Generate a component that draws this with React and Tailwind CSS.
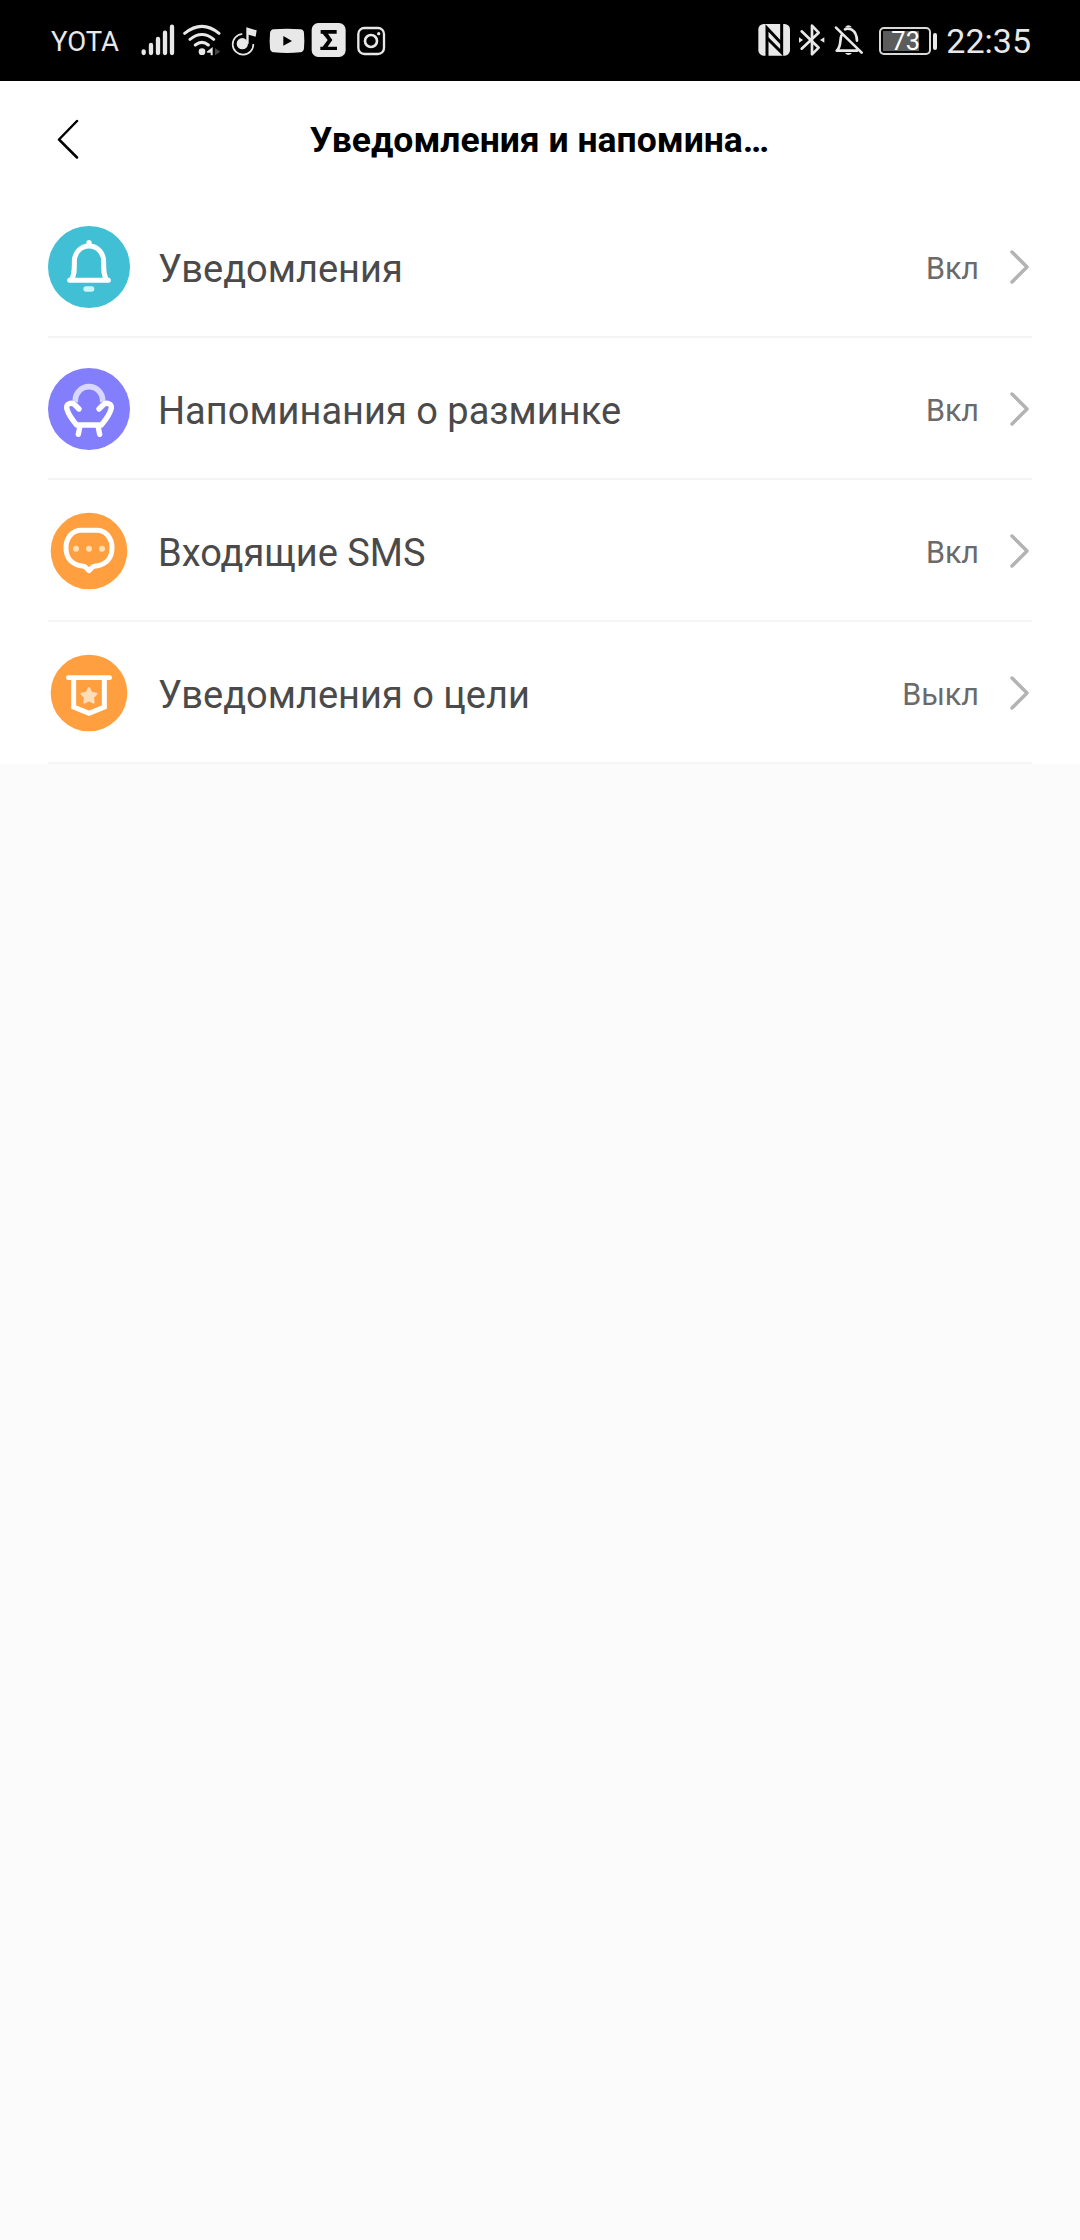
import React from "react";

function BellIcon() {
    return (
        <svg className="block size-[82px]" viewBox="0 0 246 246" fill="none">
            <circle cx="123" cy="123" r="123" fill="#40bfd5" />
            <g stroke="#fff" strokeWidth="15" strokeLinecap="round" strokeLinejoin="round">
                <path d="M65 163H181" />
                <path d="M70 161C80 147 79 130 79 107C79 80 98 60 123 60C148 60 167 80 167 107C167 130 166 147 176 161" />
            </g>
            <circle cx="123" cy="50" r="8" fill="#fff" />
            <rect x="106" y="181" width="33" height="16" rx="8" fill="#c8f6fb" />
        </svg>
    );
}

function ChairIcon() {
    return (
        <svg className="block size-[82px]" viewBox="0 0 246 246" fill="none">
            <circle cx="123" cy="123" r="123" fill="#837ffc" />
            <path d="M82 103V97A41 41 0 0 1 164 97V103" stroke="#d8d7ff" strokeWidth="17" />
            <path
                d="M93 123L81 111Q70 102 60 109Q53 115 58 127Q63 144 86 171H160Q183 144 188 127Q193 115 186 109Q176 102 165 111L153 123M96 174L91 199M150 174L155 199"
                stroke="#fff"
                strokeWidth="16"
                strokeLinecap="round"
                strokeLinejoin="round"
            />
        </svg>
    );
}

function SmsIcon() {
    return (
        <svg className="block size-[82px]" viewBox="0 0 246 246" fill="none">
            <circle cx="123" cy="123" r="115" fill="#ff9f3f" />
            <path
                d="M100 61H146C173 61 192 83 192 113C192 145 174 164 143 168Q134 169 131 174L123 182L115 174Q112 169 103 168C72 164 54 145 54 113C54 83 73 61 100 61Z"
                stroke="#fff"
                strokeWidth="15"
                strokeLinejoin="round"
            />
            <g fill="#ffe0b5">
                <circle cx="84" cy="116" r="9" />
                <circle cx="123" cy="116" r="9" />
                <circle cx="162" cy="116" r="9" />
            </g>
        </svg>
    );
}

function GoalIcon() {
    return (
        <svg className="block size-[82px]" viewBox="0 0 246 246" fill="none">
            <circle cx="123" cy="123" r="115" fill="#ff9f3f" />
            <path d="M61 77H185" stroke="#fff" strokeWidth="14" strokeLinecap="round" />
            <path d="M77 78V165L123 184L169 165V78" stroke="#fff" strokeWidth="15" />
            <path
                d="M123 108L130 122L146 125L135 137L137 152L123 145L109 152L111 137L100 125L116 122Z"
                fill="#ffddb8"
                stroke="#ffddb8"
                strokeWidth="6"
                strokeLinejoin="round"
            />
        </svg>
    );
}

const rows = [
    { label: "Уведомления", value: "Вкл", Icon: BellIcon },
    { label: "Напоминания о разминке", value: "Вкл", Icon: ChairIcon },
    { label: "Входящие SMS", value: "Вкл", Icon: SmsIcon },
    { label: "Уведомления о цели", value: "Выкл", Icon: GoalIcon },
];

function StatusBar() {
    return (
        <div className="h-[81px] bg-black pt-5 pl-[51px] pr-[49px] flex items-start justify-between text-[#e8e8e8]">
            <div className="flex items-start">
                <span className="w-[89px] text-[27.5px] leading-[43px] whitespace-nowrap">YOTA</span>

                {/* Signal */}
                <svg className="h-10 w-[36px]" viewBox="0 0 108 120" fill="none" stroke="currentColor" strokeWidth="13" strokeLinecap="round">
                    <path d="M11 94V99M33 75V99M54 57V99M75 38V99M96 20V99" />
                </svg>

                {/* Wi-Fi */}
                <svg className="ml-[7px] h-10 w-[40px]" viewBox="0 0 120 120" fill="none" stroke="currentColor" strokeWidth="9" strokeLinecap="round">
                    <path d="M5 40Q57-2 108 40M21 58Q57 29 92 58M37 75Q57 59 76 75" />
                    <circle cx="57" cy="95" r="10" fill="currentColor" stroke="none" />
                    <path d="M71 95L89 81V106H83V98H73Z" fill="currentColor" stroke="none" />
                    <path d="M96 84L112 95L96 106Z" fill="#444" stroke="none" />
                </svg>

                {/* Music */}
                <svg className="ml-[8px] h-10 w-[28px]" viewBox="0 0 84 120" fill="none">
                    <path d="M34 42A31 31 0 1 0 67 72" stroke="currentColor" strokeWidth="5" />
                    <circle cx="34" cy="71" r="17" fill="currentColor" />
                    <path d="M46 71V22L77 31L74 50L53 44V71Z" fill="currentColor" />
                </svg>

                {/* YouTube */}
                <svg className="ml-[10px] h-10 w-[36px]" viewBox="0 0 108 120">
                    <path d="M14 28Q54 24 94 28Q105 29 105 40Q107 62 105 85Q104 96 94 97Q54 101 14 97Q4 96 3 85Q1 62 3 40Q4 29 14 28Z" fill="currentColor" />
                    <path d="M43 48L69 63L43 77Z" fill="#000" />
                </svg>

                {/* Sigma */}
                <svg className="ml-[6px] h-10 w-[36px]" viewBox="0 0 108 120">
                    <rect x="2" y="9" width="102" height="102" rx="20" fill="currentColor" />
                    <path d="M29 30H77V41H51L64 60L50 80H78V90H28V80H35L50 60L35 41H29Z" fill="#000" />
                </svg>

                {/* Instagram */}
                <svg className="ml-[10px] h-10 w-[30px]" viewBox="0 0 90 120" fill="none" stroke="currentColor">
                    <rect x="4" y="24" width="77" height="78" rx="18" strokeWidth="7" />
                    <circle cx="42" cy="63" r="18" strokeWidth="8" />
                    <circle cx="65" cy="41" r="5" fill="currentColor" stroke="none" />
                </svg>
            </div>

            <div className="flex items-start">
                {/* NFC */}
                <svg className="h-10 w-[34px]" viewBox="0 0 102 120" fill="none">
                    <rect x="1" y="12" width="95" height="95" rx="16" fill="currentColor" />
                    <path d="M27 108V24L70 70" stroke="#000" strokeWidth="9" />
                    <path d="M27 54L71 98V11" stroke="#000" strokeWidth="9" />
                </svg>

                {/* Bluetooth */}
                <svg className="ml-[6px] h-10 w-[28px]" viewBox="0 0 84 120" fill="none" stroke="currentColor" strokeWidth="8" strokeLinejoin="round" strokeLinecap="round">
                    <path d="M11 34L62 83L42 103V17L62 38L11 86" />
                    <path d="M3 52L15 60L3 68ZM79 52L66 60L79 68Z" fill="currentColor" stroke="none" />
                </svg>

                {/* Muted bell */}
                <svg className="ml-[8px] h-10 w-[30px]" viewBox="0 0 90 120" fill="none" stroke="currentColor" strokeWidth="8" strokeLinecap="round">
                    <path d="M6 23L83 98M22 47C17 62 22 80 8 92H69" strokeLinejoin="round" />
                    <path d="M33 28Q41 23 53 29Q68 38 69 62" />
                    <path d="M33 22Q43 9 54 22Z" fill="currentColor" stroke="none" />
                    <path d="M33 99H54Q43 111 33 99Z" fill="currentColor" stroke="none" />
                </svg>

                {/* Battery */}
                <div className="ml-[15px] mt-[7px] flex items-center">
                    <div className="flex h-[28px] w-[52px] rounded-[5px] border-2 border-[#d8d8d8] p-[2px]">
                        <div className="flex h-full w-[36px] bg-[#5c5c5c]">
                            <span className="ml-[8px] text-[25.5px] leading-[21px] text-white">73</span>
                        </div>
                    </div>
                    <div className="ml-[2px] h-[17px] w-[4px] rounded-[2px] bg-[#e8e8e8]" />
                </div>

                <span className="ml-[9px] text-[34px] leading-[43px]">22:35</span>
            </div>
        </div>
    );
}

export default function App() {
    return (
        <div className="min-h-[2240px] w-[1080px] bg-[#fbfbfb] font-[Roboto,sans-serif]">
            <StatusBar />

            <div className="bg-white">
                <header className="flex h-[115px] items-center pl-[56px] pr-[80px]">
                    <svg className="size-[40px] shrink-0" viewBox="0 0 40 40" fill="none" stroke="#000" strokeWidth="2.5" strokeLinecap="round" strokeLinejoin="round">
                        <path d="M21 2L3 20.500L21 38.500" />
                    </svg>
                    <h1 className="flex-1 pt-[5px] pr-[17px] text-center text-[35.5px] font-bold text-black">Уведомления и напомина…</h1>
                </header>

                <ul className="pl-[48px] pr-[48px]">
                    {rows.map(({ label, value, Icon }) => (
                        <li key={label} className="flex h-[142px] items-center border-b-2 border-[#f5f5f5] pt-[2px]">
                            <Icon />
                            <span className="ml-[28px] flex-1 pt-[4px] text-[38px] text-[#4a4a4a]">{label}</span>
                            <span className="pt-[4px] text-[30.5px] text-[#6a6a6a]">{value}</span>
                            <svg className="ml-[29px] h-[34px] w-[24px]" viewBox="0 0 24 34" fill="none" stroke="#b3b3b3" strokeWidth="3.5" strokeLinecap="round" strokeLinejoin="round">
                                <path d="M4 2L19 17L4 32" />
                            </svg>
                        </li>
                    ))}
                </ul>
            </div>
        </div>
    );
}
